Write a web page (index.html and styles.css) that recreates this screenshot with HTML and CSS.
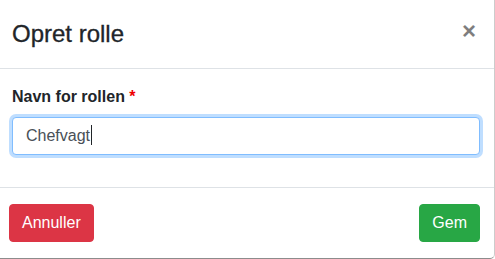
FILE: index.html
```html
<!DOCTYPE html>
<html lang="da">
<head>
<meta charset="utf-8">
<title>Opret rolle</title>
<link rel="stylesheet" href="styles.css">
</head>
<body>
<div class="modal">
  <div class="modal-header">
    <h4 class="modal-title">Opret rolle</h4>
    <button class="close" type="button" aria-label="Luk">×</button>
  </div>
  <div class="modal-body">
    <div class="form-group">
      <label class="form-label">Navn for rollen <span class="req">*</span></label>
      <div class="form-control is-focused" role="textbox">Chefvagt<span class="caret"></span></div>
    </div>
  </div>
  <div class="modal-footer">
    <button class="btn btn-danger" type="button">Annuller</button>
    <button class="btn btn-success" type="button">Gem</button>
  </div>
</div>
</body>
</html>
```

FILE: styles.css
```css
* { box-sizing: border-box; }
html, body {
  margin: 0;
  padding: 0;
  background: #fff;
  overflow: hidden;
}
body {
  font-family: "Liberation Sans", Arial, sans-serif;
  font-size: 16px;
  line-height: 1.5;
  color: #212529;
}
.modal {
  width: 495px;
  height: 259px;
  display: flex;
  flex-direction: column;
  background: #fff;
  border-right: 1px solid rgba(0,0,0,.2);
  border-bottom: 1px solid rgba(0,0,0,.45);
  border-bottom-right-radius: 5px;
}
.modal-header {
  display: flex;
  align-items: flex-start;
  justify-content: space-between;
  padding: 16px 18px 16px 12px;
  border-bottom: 1px solid #dee2e6;
}
.modal-title {
  margin: 0;
  font-size: 24px;
  font-weight: 500;
  line-height: 36px;
  -webkit-text-stroke: 0.3px #212529;
}
.close {
  border: 0;
  background: transparent;
  padding: 0;
  margin: 1px 0 0 0;
  font-family: "Liberation Sans", Arial, sans-serif;
  font-size: 24px;
  font-weight: 700;
  line-height: 28px;
  color: #000;
  opacity: .5;
}
.modal-body {
  padding: 16px 14px 16px 12px;
}
.form-group {
  margin-bottom: 16px;
}
.form-label {
  display: block;
  margin-bottom: 8px;
  font-weight: 700;
  line-height: 24px;
}
.req { color: #e00; }
.form-control {
  height: 38px;
  padding: 6px 13px;
  font-size: 16px;
  line-height: 24px;
  color: #495057;
  background: #fff;
  border: 1px solid #ced4da;
  border-radius: 4px;
}
.form-control.is-focused {
  border-color: #80bdff;
  box-shadow: 0 0 0 3px rgba(0,123,255,.25);
}
.caret {
  display: inline-block;
  width: 1px;
  height: 20px;
  margin-left: 1px;
  vertical-align: -4px;
  background: #212529;
}
.modal-footer {
  display: flex;
  align-items: center;
  justify-content: space-between;
  padding: 16px 14px 16px 9px;
  border-top: 1px solid #dee2e6;
}
.btn {
  font-family: "Liberation Sans", Arial, sans-serif;
  font-size: 16px;
  line-height: 24px;
  padding: 6px 12px;
  border: 1px solid transparent;
  border-radius: 4px;
  color: #fff;
}
.btn-danger { background: #dc3545; border-color: #dc3545; }
.btn-success { background: #28a745; border-color: #28a745; }
```
